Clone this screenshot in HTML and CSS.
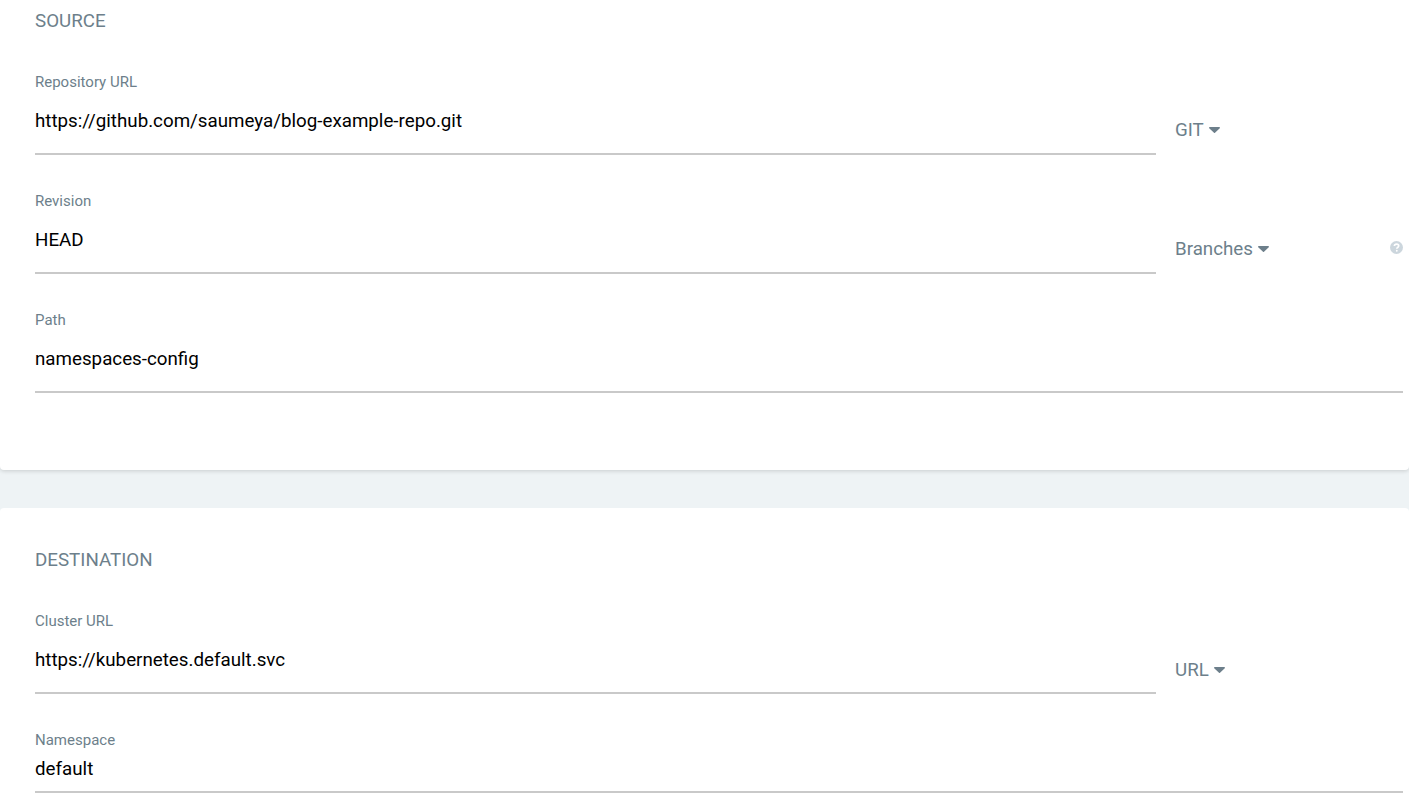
FILE: index.html
```html
<!DOCTYPE html>
<html lang="en">
<head>
<meta charset="utf-8">
<title>Application</title>
<link rel="stylesheet" href="styles.css">
</head>
<body>
<main class="page">
  <section class="card card-source">
    <h2 class="title">SOURCE</h2>
    <div class="row">
      <div class="field"><label class="label">Repository URL</label><div class="value">https://github.com/saumeya/blog-example-repo.git</div></div>
      <div class="side"><span class="drop">GIT<svg class="caret" viewBox="0 0 11 6"><path d="M.8 0h9.4c.7 0 1 .7.6 1.2L6 5.7c-.3.3-.7.3-1 0L.2 1.2C-.2.7.1 0 .8 0z"/></svg></span></div>
    </div>
    <div class="row">
      <div class="field"><label class="label">Revision</label><div class="value">HEAD</div></div>
      <div class="side"><span class="drop">Branches<svg class="caret" viewBox="0 0 11 6"><path d="M.8 0h9.4c.7 0 1 .7.6 1.2L6 5.7c-.3.3-.7.3-1 0L.2 1.2C-.2.7.1 0 .8 0z"/></svg></span>
        <svg class="help" viewBox="0 0 14 14"><circle cx="7" cy="7" r="7"/><path class="help-q" d="M4.7 5.4C4.8 4 5.8 3.3 7.1 3.3c1.3 0 2.3.8 2.3 1.9 0 1.8-2.1 1.7-2.1 3.2"/><circle class="help-dot" cx="7.3" cy="10.5" r="1"/></svg>
      </div>
    </div>
    <div class="row">
      <div class="field"><label class="label">Path</label><div class="value">namespaces-config</div></div>
    </div>
  </section>
  <section class="card card-dest">
    <h2 class="title">DESTINATION</h2>
    <div class="row">
      <div class="field"><label class="label">Cluster URL</label><div class="value">https://kubernetes.default.svc</div></div>
      <div class="side side-low"><span class="drop">URL<svg class="caret" viewBox="0 0 11 6"><path d="M.8 0h9.4c.7 0 1 .7.6 1.2L6 5.7c-.3.3-.7.3-1 0L.2 1.2C-.2.7.1 0 .8 0z"/></svg></span></div>
    </div>
    <div class="row row-tight">
      <div class="field"><label class="label">Namespace</label><div class="value">default</div></div>
    </div>
  </section>
</main>
</body>
</html>
```
FILE: styles.css
```css
* { box-sizing: border-box; }
html, body { margin: 0; height: 796px; overflow: hidden; }
body { background: #eef3f5; font-family: Roboto, "Liberation Sans", sans-serif; }
.page { display: flex; flex-direction: column; gap: 38px; }
.card { background: #fff; padding: 0 6px 0 35px; }
.card-source { height: 470px; padding-top: 9px; border-radius: 0 0 4px 4px; box-shadow: 0 1px 4px rgba(0,0,0,.16); }
.card-dest { height: 300px; padding-top: 40px; border-radius: 4px 4px 0 0; }
.title { margin: 0 0 30px; height: 24px; font-size: 18.75px; line-height: 24px; font-weight: 400; color: #6d7f8b; }
.row { display: flex; height: 119px; }
.field { flex: 1; height: 92px; padding-top: 9px; border-bottom: 2px solid #c9c9c9; }
.label { display: block; height: 20px; font-size: 15px; line-height: 20px; color: #6d7f8b; }
.value { margin-top: 17px; font-size: 18.75px; line-height: 24px; color: #000; }
.side { position: relative; width: 247px; padding: 55px 0 0 19px; font-size: 18.75px; line-height: 24px; color: #6d7f8b; }
.side-low { padding-top: 56px; }
.drop { display: inline-flex; align-items: center; gap: 5px; }
.caret { width: 11px; height: 6px; fill: #6d7f8b; margin-top: -1px; }
.help { position: absolute; right: 0; top: 59px; width: 13px; height: 13px; }
.help circle { fill: #ccd6dd; }
.help .help-q { fill: none; stroke: #fff; stroke-width: 1.8; }
.help .help-dot { fill: #fff; }
.row-tight { height: 72px; }
.row-tight .field { height: 72px; }
.row-tight .value { margin-top: 7px; }
```
